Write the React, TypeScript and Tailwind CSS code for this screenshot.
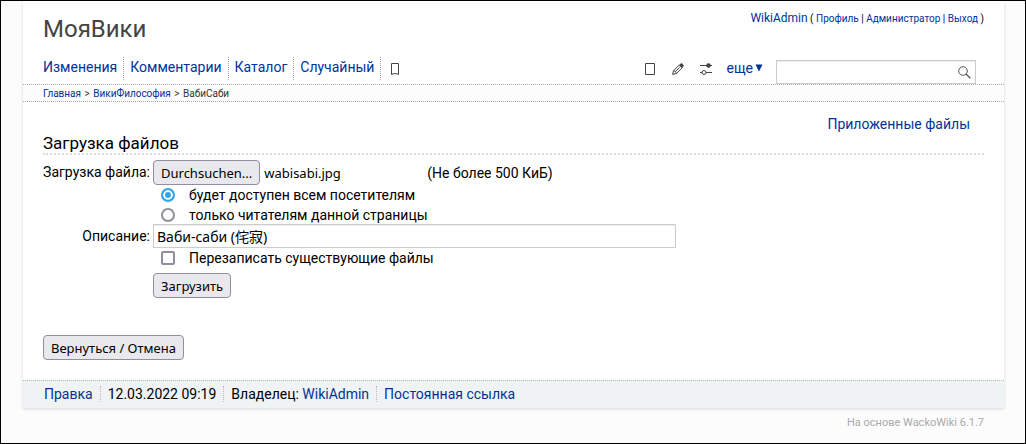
import React, { useRef, useState } from 'react';

interface WikiLinkProps {
  children: React.ReactNode;
  className?: string;
}

const WikiLink: React.FC<WikiLinkProps> = ({ children, className = '' }) => (
  <a href="#" className={`text-[#003399] hover:underline ${className}`}>
    {children}
  </a>
);

const buttonClass =
  "h-[25px] px-[7px] rounded border border-[#8f8f9d] bg-[#e9e9ed] pt-px text-[13px] leading-[22px] text-black whitespace-nowrap font-['Noto_Sans',sans-serif] hover:bg-[#d0d0d7]";

const inputClass = 'border border-[#cccccc] bg-white shadow-[inset_0_1px_1px_rgba(0,0,0,0.075)] outline-none';

const radioClass =
  'appearance-none m-0 ml-2 size-[14px] rounded-full border-2 border-[#8f8f9d] bg-white checked:border-[#35a5e5] checked:bg-[#35a5e5] checked:shadow-[inset_0_0_0_2px_white]';

const BookmarkIcon = () => (
  <svg width="10" height="12" viewBox="0 0 10 12" fill="none" stroke="#444" strokeWidth="1">
    <path d="M1.5 .5h7v11c-1.2-1.2-5.8-1.2-7 0z" />
  </svg>
);

const PageIcon = () => (
  <svg width="10" height="12" viewBox="0 0 10 12" fill="none" stroke="#444" strokeWidth="1">
    <path d="M.5 .5h9v11h-9z" />
  </svg>
);

const PencilIcon = () => (
  <svg width="12" height="12" viewBox="0 0 12 12" fill="none" stroke="#444" strokeWidth="1">
    <path d="M.6 11.4l.9-3.6 6-6 2.8 2.8-6 6zM1.5 7.8c1.5 0 2.8 1.2 2.8 2.8M3.2 8.8l4.5-4.4" />
    <path d="M7 2.3L8.8.5c.4-.4.9-.4 1.3 0l1.4 1.4c.4.4.4.9 0 1.3L9.7 5z" fill="#444" stroke="none" />
  </svg>
);

const SettingsIcon = () => (
  <svg width="12" height="12" viewBox="0 0 12 12" fill="none" stroke="#444" strokeWidth="1">
    <path d="M0 2.5h12M0 9.5h2M6 9.5h6" />
    <circle cx="8.5" cy="2.5" r="2.3" fill="#444" stroke="none" />
    <circle cx="4" cy="9.5" r="2" />
  </svg>
);

const SearchIcon = () => (
  <svg width="13" height="13" viewBox="0 0 13 13" fill="none" stroke="#555" strokeWidth="1">
    <circle cx="5" cy="5" r="4.3" />
    <path d="M8 8l4.3 4.3" strokeWidth="1.3" />
  </svg>
);

const navItems = ['Изменения', 'Комментарии', 'Каталог', 'Случайный'];

const Header = () => (
  <header className="border-b border-dotted border-[#aaaaaa]">
    <div className="flex justify-between pl-5 pr-5">
      <h1 className="pt-3 text-2xl leading-8 text-[#444444]">МояВики</h1>
      <div className="pt-[9px] text-[10px] leading-[18px]">
        <WikiLink className="text-xs">WikiAdmin</WikiLink> ( <WikiLink>Профиль</WikiLink> |{' '}
        <WikiLink>Администратор</WikiLink> | <WikiLink>Выход</WikiLink> )
      </div>
    </div>
    <div className="mt-3 flex h-[27px] items-start justify-between pl-5 pr-7">
      <nav className="flex">
        {navItems.map((item) => (
          <div key={item} className="mr-1.5 h-[23px] border-r border-dotted border-[#aaaaaa] pr-1.5 leading-5">
            <WikiLink>{item}</WikiLink>
          </div>
        ))}
        <a href="#" aria-label="Закладка" className="ml-[3px] mt-1.5">
          <BookmarkIcon />
        </a>
      </nav>
      <div className="flex">
        <a href="#" aria-label="Просмотр" className="mr-[17px] mt-1.5">
          <PageIcon />
        </a>
        <a href="#" aria-label="Правка" className="mr-4 mt-1.5">
          <PencilIcon />
        </a>
        <a href="#" aria-label="Свойства" className="mr-[14px] mt-1.5">
          <SettingsIcon />
        </a>
        <WikiLink className="mr-[13px] mt-px flex h-5 items-center gap-0.5 leading-5">
          еще
          <svg width="8" height="8" viewBox="0 0 8 8" fill="#003399">
            <path d="M.5 .5h7L4 7.5z" />
          </svg>
        </WikiLink>
        <form className="relative -mb-px mt-[3px]" onSubmit={(e) => e.preventDefault()}>
          <input type="search" aria-label="Поиск" className={`block h-6 w-[200px] pl-1 pr-6 ${inputClass}`} />
          <button type="submit" aria-label="Найти" className="absolute right-[5px] top-[6px]">
            <SearchIcon />
          </button>
        </form>
      </div>
    </div>
  </header>
);

const UploadForm = () => {
  const fileInput = useRef<HTMLInputElement>(null);
  const [fileName, setFileName] = useState('wabisabi.jpg');

  return (
    <form className="mt-[5px]" onSubmit={(e) => e.preventDefault()}>
      <div className="grid grid-cols-[107px_1fr] gap-x-[3px]">
        <label htmlFor="file" className="text-right leading-6 whitespace-nowrap">
          Загрузка файла:
        </label>
        <div className="flex h-[25px] items-center">
          <button type="button" className={buttonClass} onClick={() => fileInput.current?.click()}>
            Durchsuchen...
          </button>
          <input
            ref={fileInput}
            id="file"
            type="file"
            className="hidden"
            onChange={(e) => setFileName(e.target.files?.[0]?.name ?? '')}
          />
          <span className="w-[167px] pl-1 pt-px pr-2 text-[13px] font-['Noto_Sans',sans-serif]">{fileName}</span>
          <span>(Не более 500 КиБ)</span>
        </div>

        <div className="col-start-2">
          <div className="flex h-5 items-center">
            <input type="radio" id="global" name="to" defaultChecked className={radioClass} />
            <label htmlFor="global" className="pl-3.5">
              будет доступен всем посетителям
            </label>
          </div>
          <div className="flex h-5 items-center">
            <input type="radio" id="here" name="to" className={radioClass} />
            <label htmlFor="here" className="pl-3.5">
              только читателям данной страницы
            </label>
          </div>
        </div>

        <label htmlFor="description" className="-mt-px text-right leading-6">
          Описание:
        </label>
        <input
          id="description"
          type="text"
          defaultValue="Ваби-саби (侘寂)"
          className={`-mt-px h-6 w-full max-w-[523px] px-[3px] text-sm font-['Noto_Sans','Noto_Sans_CJK_JP',sans-serif] ${inputClass}`}
        />

        <div className="col-start-2 flex h-5 items-center">
          <input
            type="checkbox"
            id="overwrite"
            className="ml-2 size-[14px] appearance-none rounded-xs border-2 border-[#8f8f9d] bg-white checked:bg-[#35a5e5]"
          />
          <label htmlFor="overwrite" className="pl-3.5">
            Перезаписать существующие файлы
          </label>
        </div>

        <div className="col-start-2 mt-[5px] flex">
          <button type="submit" className={buttonClass}>
            Загрузить
          </button>
        </div>
      </div>
      <button type="button" className={`mt-[37px] ${buttonClass}`}>
        Вернуться / Отмена
      </button>
    </form>
  );
};

const Footer = () => (
  <footer className="flex h-7 items-center border-t border-dotted border-[#bbbbbb] bg-[#eff3f4] pb-0.5 pl-[21px] leading-4">
    <div className="mr-[7px] border-r border-dotted border-[#bbbbbb] pr-[7px]">
      <WikiLink>Правка</WikiLink>
    </div>
    <div className="mr-[7px] border-r border-dotted border-[#bbbbbb] pr-[7px]">12.03.2022 09:19</div>
    <div className="mr-[7px] border-r border-dotted border-[#bbbbbb] pr-[7px]">
      Владелец: <WikiLink>WikiAdmin</WikiLink>
    </div>
    <WikiLink>Постоянная ссылка</WikiLink>
  </footer>
);

const App: React.FC = () => {
  return (
    <div className="min-h-screen border border-black bg-[#fcfcfc] pl-[22px] pr-[21px] text-sm leading-5 text-black font-[Roboto,sans-serif]">
      <div className="bg-white shadow-[0_1px_3px_rgba(0,0,0,0.15)]">
        <Header />
        <nav className="h-[17px] border-b border-dotted border-[#aaaaaa] bg-[#fcfcfc] pl-5 text-[10px] leading-[18px] text-[#333333]">
          <WikiLink>Главная</WikiLink> <span className="px-px">&gt;</span> <WikiLink>ВикиФилософия</WikiLink>{' '}
          <span className="px-px">&gt;</span> ВабиСаби
        </nav>
        <main className="px-5 pb-5 pt-3">
          <div className="flex h-[19px] justify-end pr-3.5">
            <WikiLink>Приложенные файлы</WikiLink>
          </div>
          <h2 className="border-b-2 border-dotted border-[#dddddd] text-[17px] leading-5">Загрузка файлов</h2>
          <UploadForm />
        </main>
        <Footer />
      </div>
      <p className="pr-5 pt-[5px] text-right text-[11px] text-[#aaaaaa]">На основе WackoWiki 6.1.7</p>
    </div>
  );
};

export default App;
